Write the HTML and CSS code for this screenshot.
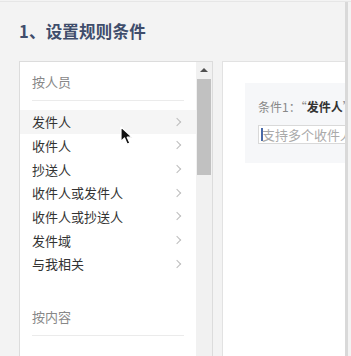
FILE: index.html
```html
<!DOCTYPE html>
<html lang="zh">
<head>
<meta charset="utf-8">
<link rel="stylesheet" href="styles.css">
</head>
<body>
<div class="frame">
  <div class="main">
    <h1 class="title">1、设置规则条件</h1>
    <div class="content">
      <div class="left-panel">
        <div class="list">
          <div class="section">
            <div class="section-title">按人员</div>
            <ul class="items">
              <li class="item active"><span>发件人</span><i class="chev"></i></li>
              <li class="item"><span>收件人</span><i class="chev"></i></li>
              <li class="item"><span>抄送人</span><i class="chev"></i></li>
              <li class="item"><span>收件人或发件人</span><i class="chev"></i></li>
              <li class="item"><span>收件人或抄送人</span><i class="chev"></i></li>
              <li class="item"><span>发件域</span><i class="chev"></i></li>
              <li class="item"><span>与我相关</span><i class="chev"></i></li>
            </ul>
          </div>
          <div class="section">
            <div class="section-title">按内容</div>
          </div>
        </div>
        <div class="scrollbar">
          <div class="arrow-up"></div>
          <div class="thumb"></div>
        </div>
        <svg class="cursor" width="15" height="21" viewBox="0 0 15 21">
          <path d="M1 1 L1 15.5 L4.5 12 L7.2 18.2 L9.8 17.1 L7.2 11.2 L12.2 11.2 Z" fill="#111" stroke="#fff" stroke-width="1.2" stroke-linejoin="round"/>
        </svg>
      </div>
      <div class="right-panel">
        <div class="cond-box">
          <div class="cond-label">条件1：“<b>发件人</b>”</div>
          <div class="input"><span class="caret"></span><span class="placeholder">支持多个收件人，以逗号分隔</span></div>
        </div>
      </div>
    </div>
  </div>
  <div class="edge"></div>
</div>
</body>
</html>
```
FILE: styles.css
```css
* { box-sizing: border-box; }
html, body {
  margin: 0;
  padding: 0;
  width: 351px;
  height: 356px;
  overflow: hidden;
  background: #f3f3f3;
  font-family: "Noto Sans CJK SC", "Liberation Sans", sans-serif;
}
.frame {
  display: flex;
  height: 356px;
  border-top: 1px solid #e6e6e6;
  margin-top: 1px;
}
.main {
  width: 345px;
  flex: none;
  overflow: hidden;
}
.edge {
  width: 3px;
  flex: none;
  background: #d9d9d9;
}
.title {
  margin: 0;
  padding: 17px 0 0 19px;
  height: 59px;
  font-size: 16.5px;
  line-height: 24px;
  font-weight: bold;
  color: #3f4d6b;
  letter-spacing: 0.2px;
}
.content {
  display: flex;
  gap: 9px;
  padding-left: 19px;
  height: 300px;
}
.left-panel {
  position: relative;
  width: 194px;
  flex: none;
  display: flex;
  background: #fff;
  border: 1px solid #dcdcdc;
  border-bottom: none;
}
.list {
  width: 176px;
  flex: none;
}
.section {
  padding-top: 10px;
  margin-bottom: 21px;
}
.section-title {
  margin: 0 12px;
  font-size: 13px;
  line-height: 20px;
  color: #888;
  padding-bottom: 8px;
  border-bottom: 1px solid #ebebeb;
}
.items {
  list-style: none;
  margin: 9px 0 0;
  padding: 0;
}
.item {
  display: flex;
  align-items: center;
  justify-content: space-between;
  height: 23.67px;
  padding: 0 14px 0 12px;
  font-size: 13px;
  color: #333;
}
.item.active { background: #f5f5f5; }
.chev {
  width: 6px;
  height: 6px;
  border-top: 1px solid #bdbdbd;
  border-right: 1px solid #bdbdbd;
  transform: rotate(45deg);
  margin-right: 2px;
}
.scrollbar {
  width: 16px;
  flex: none;
  background: #f1f1f1;
  display: flex;
  flex-direction: column;
  align-items: center;
}
.arrow-up {
  margin-top: 6px;
  width: 0;
  height: 0;
  border-left: 4px solid transparent;
  border-right: 4px solid transparent;
  border-bottom: 4px solid #505050;
}
.thumb {
  margin-top: 7px;
  width: 14px;
  height: 96px;
  background: #c1c1c1;
}
.cursor {
  position: absolute;
  left: 100px;
  top: 64px;
}
.right-panel {
  flex: 1;
  background: #fff;
  border: 1px solid #e2e2e2;
  border-bottom: none;
  border-right: none;
  padding: 21px 0 0 22px;
  overflow: hidden;
}
.cond-box {
  width: 200px;
  height: 80px;
  background: #f6f7f9;
  padding: 14px 0 0 13px;
}
.cond-label {
  font-size: 12px;
  line-height: 20px;
  color: #888;
  white-space: nowrap;
}
.cond-label b { color: #333; }
.input {
  margin-top: 8px;
  width: 180px;
  height: 19px;
  background: #fff;
  border: 1px solid #d9d9d9;
  display: flex;
  align-items: center;
  padding-left: 2px;
  white-space: nowrap;
}
.caret {
  width: 2px;
  height: 13px;
  background: #4a6aa8;
  flex: none;
}
.placeholder {
  font-size: 13px;
  color: #aaa;
  margin-left: -1px;
}
```
